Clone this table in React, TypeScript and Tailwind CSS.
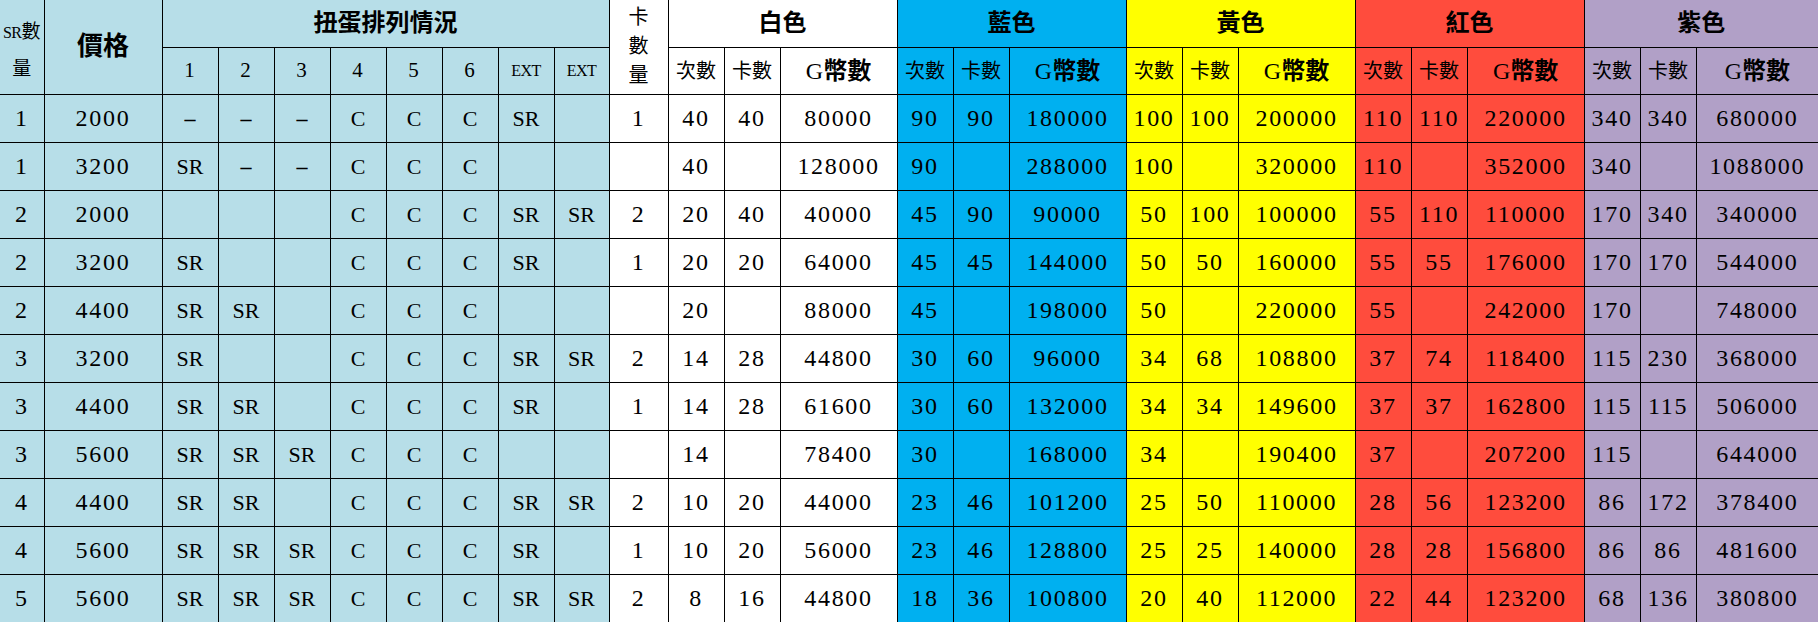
import React from "react";

/**
 * Gacha price sheet: light-blue slot layout on the left, then one column group
 * per colour (white / blue / yellow / red / purple) with pulls, cards and G coins.
 */

type ColorCells = [string, string, string];

type Row = {
  sr: string;
  price: string;
  slots: string[];
  cards: string;
  colors: ColorCells[];
};

const GROUPS = [
  { name: "白色", bg: "bg-white" },
  { name: "藍色", bg: "bg-[#00b0f0]" },
  { name: "黃色", bg: "bg-[#ffff00]" },
  { name: "紅色", bg: "bg-[#ff4c3d]" },
  { name: "紫色", bg: "bg-[#b1a0c7]" },
];

const COLS = [
  "w-[44px]",
  "w-[118px]",
  "w-[56px]",
  "w-[56px]",
  "w-[56px]",
  "w-[56px]",
  "w-[56px]",
  "w-[56px]",
  "w-[56px]",
  "w-[55px]",
  "w-[59px]",
  "w-[56px]",
  "w-[56px]",
  "w-[117px]",
  "w-[56px]",
  "w-[56px]",
  "w-[117px]",
  "w-[56px]",
  "w-[56px]",
  "w-[117px]",
  "w-[56px]",
  "w-[56px]",
  "w-[117px]",
  "w-[56px]",
  "w-[56px]",
  "w-[122px]",
];

const ROWS: Row[] = [
  {
    sr: "1", price: "2000", slots: ["–", "–", "–", "C", "C", "C", "SR", ""], cards: "1",
    colors: [["40", "40", "80000"], ["90", "90", "180000"], ["100", "100", "200000"], ["110", "110", "220000"], ["340", "340", "680000"]],
  },
  {
    sr: "1", price: "3200", slots: ["SR", "–", "–", "C", "C", "C", "", ""], cards: "",
    colors: [["40", "", "128000"], ["90", "", "288000"], ["100", "", "320000"], ["110", "", "352000"], ["340", "", "1088000"]],
  },
  {
    sr: "2", price: "2000", slots: ["", "", "", "C", "C", "C", "SR", "SR"], cards: "2",
    colors: [["20", "40", "40000"], ["45", "90", "90000"], ["50", "100", "100000"], ["55", "110", "110000"], ["170", "340", "340000"]],
  },
  {
    sr: "2", price: "3200", slots: ["SR", "", "", "C", "C", "C", "SR", ""], cards: "1",
    colors: [["20", "20", "64000"], ["45", "45", "144000"], ["50", "50", "160000"], ["55", "55", "176000"], ["170", "170", "544000"]],
  },
  {
    sr: "2", price: "4400", slots: ["SR", "SR", "", "C", "C", "C", "", ""], cards: "",
    colors: [["20", "", "88000"], ["45", "", "198000"], ["50", "", "220000"], ["55", "", "242000"], ["170", "", "748000"]],
  },
  {
    sr: "3", price: "3200", slots: ["SR", "", "", "C", "C", "C", "SR", "SR"], cards: "2",
    colors: [["14", "28", "44800"], ["30", "60", "96000"], ["34", "68", "108800"], ["37", "74", "118400"], ["115", "230", "368000"]],
  },
  {
    sr: "3", price: "4400", slots: ["SR", "SR", "", "C", "C", "C", "SR", ""], cards: "1",
    colors: [["14", "28", "61600"], ["30", "60", "132000"], ["34", "34", "149600"], ["37", "37", "162800"], ["115", "115", "506000"]],
  },
  {
    sr: "3", price: "5600", slots: ["SR", "SR", "SR", "C", "C", "C", "", ""], cards: "",
    colors: [["14", "", "78400"], ["30", "", "168000"], ["34", "", "190400"], ["37", "", "207200"], ["115", "", "644000"]],
  },
  {
    sr: "4", price: "4400", slots: ["SR", "SR", "", "C", "C", "C", "SR", "SR"], cards: "2",
    colors: [["10", "20", "44000"], ["23", "46", "101200"], ["25", "50", "110000"], ["28", "56", "123200"], ["86", "172", "378400"]],
  },
  {
    sr: "4", price: "5600", slots: ["SR", "SR", "SR", "C", "C", "C", "SR", ""], cards: "1",
    colors: [["10", "20", "56000"], ["23", "46", "128800"], ["25", "25", "140000"], ["28", "28", "156800"], ["86", "86", "481600"]],
  },
  {
    sr: "5", price: "5600", slots: ["SR", "SR", "SR", "C", "C", "C", "SR", "SR"], cards: "2",
    colors: [["8", "16", "44800"], ["18", "36", "100800"], ["20", "40", "112000"], ["22", "44", "123200"], ["68", "136", "380800"]],
  },
];

const cell = "border border-black p-0 text-center align-middle whitespace-nowrap";
const lb = "bg-[#b7dee8]";
const num = "text-[24px] tracking-[1.7px]";

function slotClass(v: string) {
  return v === "–" ? "text-[22px] font-bold" : "text-[22px]";
}

export default function App() {
  return (
    <div className="h-[622px] w-[1818px] overflow-hidden bg-white">
      <table className="w-[1818px] table-fixed border-collapse border-hidden font-['Liberation_Serif','Noto_Sans_CJK_TC',serif] text-black">
        <colgroup>
          {COLS.map((c, i) => (
            <col key={i} className={c} />
          ))}
        </colgroup>
        <thead>
          <tr className="h-[47px]">
            <th rowSpan={2} className={`${cell} ${lb} pt-2 text-[19px] leading-[36px] font-normal`}>
              <span className="text-[16px] tracking-[-0.5px]">SR</span>數
              <br />量
            </th>
            <th rowSpan={2} className={`${cell} ${lb} text-[26px] font-bold`}>
              價格
            </th>
            <th colSpan={8} className={`${cell} ${lb} text-[24px] font-bold`}>
              扭蛋排列情況
            </th>
            <th rowSpan={2} className={`${cell} bg-white text-[20px] leading-[29px] font-normal`}>
              卡<br />數<br />量
            </th>
            {GROUPS.map((g) => (
              <th key={g.name} colSpan={3} className={`${cell} ${g.bg} text-[24px] font-bold`}>
                {g.name}
              </th>
            ))}
          </tr>
          <tr className="h-[47px]">
            {["1", "2", "3", "4", "5", "6"].map((n) => (
              <th key={n} className={`${cell} ${lb} text-[21px] tracking-[1px] font-normal`}>
                {n}
              </th>
            ))}
            <th className={`${cell} ${lb} text-[16px] tracking-[-0.5px] font-normal`}>EXT</th>
            <th className={`${cell} ${lb} text-[16px] tracking-[-0.5px] font-normal`}>EXT</th>
            {GROUPS.map((g) => (
              <React.Fragment key={g.name}>
                <th className={`${cell} ${g.bg} text-[20px] font-normal`}>次數</th>
                <th className={`${cell} ${g.bg} text-[20px] font-normal`}>卡數</th>
                <th className={`${cell} ${g.bg} text-[24px] font-normal`}>
                  G<span className="font-bold">幣數</span>
                </th>
              </React.Fragment>
            ))}
          </tr>
        </thead>
        <tbody>
          {ROWS.map((r, ri) => (
            <tr key={ri} className="h-[48px]">
              <td className={`${cell} ${lb} ${num}`}>{r.sr}</td>
              <td className={`${cell} ${lb} ${num}`}>{r.price}</td>
              {r.slots.map((s, si) => (
                <td key={si} className={`${cell} ${lb} ${slotClass(s)}`}>
                  {s}
                </td>
              ))}
              <td className={`${cell} bg-white ${num}`}>{r.cards}</td>
              {r.colors.map((c, ci) => (
                <React.Fragment key={ci}>
                  {c.map((v, vi) => (
                    <td key={vi} className={`${cell} ${GROUPS[ci].bg} ${num}`}>
                      {v}
                    </td>
                  ))}
                </React.Fragment>
              ))}
            </tr>
          ))}
        </tbody>
      </table>
    </div>
  );
}
